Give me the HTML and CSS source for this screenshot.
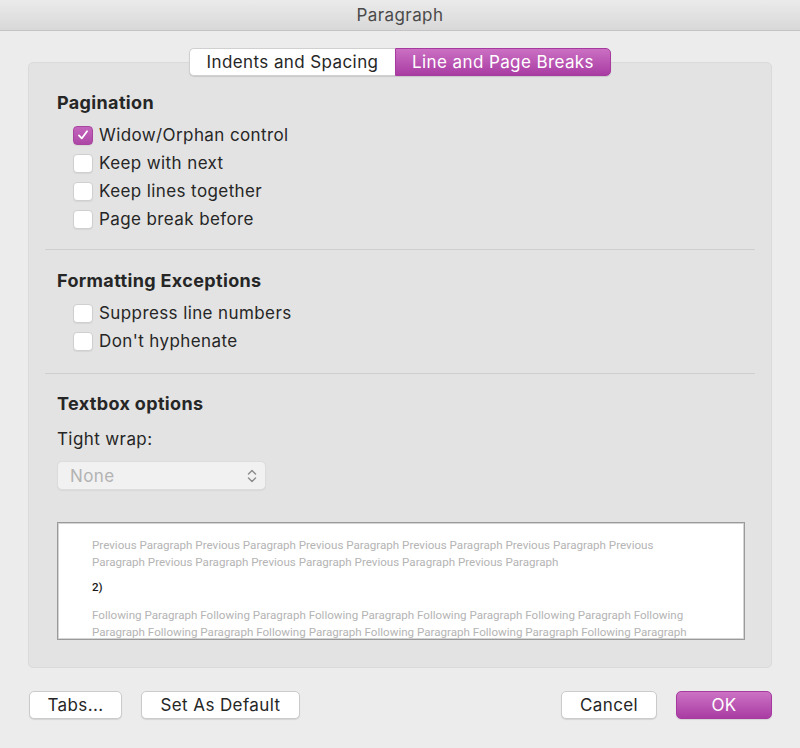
FILE: index.html
```html
<!DOCTYPE html>
<html>
<head>
<meta charset="utf-8">
<link rel="stylesheet" href="styles.css">
</head>
<body>
<div class="window">
  <div class="titlebar">Paragraph</div>
  <div class="main">
    <div class="tabs">
      <div class="tab">Indents and Spacing</div>
      <div class="tab active">Line and Page Breaks</div>
    </div>
    <div class="panel">
      <div class="section first">
        <div class="heading">Pagination</div>
        <div class="rows">
          <div class="row"><span class="cb checked"><svg viewBox="0 0 20 20" width="20" height="20"><path d="M5.5 10.5 L8.6 13.8 L14.5 5.8" fill="none" stroke="#fff" stroke-width="2" stroke-linecap="round" stroke-linejoin="round"/></svg></span>Widow/Orphan control</div>
          <div class="row"><span class="cb"></span>Keep with next</div>
          <div class="row"><span class="cb"></span>Keep lines together</div>
          <div class="row"><span class="cb"></span>Page break before</div>
        </div>
      </div>
      <div class="divider d1"></div>
      <div class="section second">
        <div class="heading">Formatting Exceptions</div>
        <div class="rows">
          <div class="row"><span class="cb"></span>Suppress line numbers</div>
          <div class="row"><span class="cb"></span>Don't hyphenate</div>
        </div>
      </div>
      <div class="divider d2"></div>
      <div class="section third">
        <div class="heading">Textbox options</div>
        <div class="label">Tight wrap:</div>
        <div class="select">
          <span class="select-text">None</span>
          <svg class="chev" viewBox="0 0 10 16" width="10" height="16"><path d="M1.5 6 L5 2.5 L8.5 6 M1.5 10 L5 13.5 L8.5 10" fill="none" stroke="#8a8a8a" stroke-width="1.4" stroke-linecap="round" stroke-linejoin="round"/></svg>
        </div>
        <div class="preview">
          <div class="pline">Previous Paragraph Previous Paragraph Previous Paragraph Previous Paragraph Previous Paragraph Previous</div>
          <div class="pline">Paragraph Previous Paragraph Previous Paragraph Previous Paragraph Previous Paragraph</div>
          <div class="pline num">2)</div>
          <div class="pline follow">Following Paragraph Following Paragraph Following Paragraph Following Paragraph Following Paragraph Following</div>
          <div class="pline">Paragraph Following Paragraph Following Paragraph Following Paragraph Following Paragraph Following Paragraph</div>
        </div>
      </div>
    </div>
    <div class="footer">
      <div class="group">
        <div class="btn b-tabs">Tabs...</div>
        <div class="btn b-default">Set As Default</div>
      </div>
      <div class="group">
        <div class="btn b-cancel">Cancel</div>
        <div class="btn b-ok">OK</div>
      </div>
    </div>
  </div>
</div>
</body>
</html>
```
FILE: styles.css
```css
* { box-sizing: border-box; }
html, body { margin: 0; padding: 0; }
body {
  width: 800px;
  height: 748px;
  overflow: hidden;
  background: #ececec;
  font-family: Inter, "Liberation Sans", sans-serif;
  letter-spacing: 0.4px;
  color: #262626;
}
.window {
  width: 800px;
  height: 748px;
  background: #ececec;
}
.titlebar {
  height: 31px;
  line-height: 31px;
  text-align: center;
  font-size: 17px;
  color: #4a4a4a;
  background: linear-gradient(#ebebeb, #d8d8d8);
  border-bottom: 1px solid #c4c4c4;
}
.main {
  padding: 0 28px;
}
.tabs {
  display: flex;
  justify-content: center;
  margin-top: 17px;
  height: 28px;
  position: relative;
  z-index: 1;
}
.tab {
  height: 28px;
  line-height: 27px;
  font-size: 17px;
  padding: 0;
  background: #fff;
  color: #262626;
  border: 1px solid #d0d0d0;
  border-right: none;
  border-radius: 5px 0 0 5px;
  box-shadow: 0 1px 1px rgba(0,0,0,0.12);
  width: 206px;
  text-align: center;
}
.tab.active {
  width: 216px;
  background: linear-gradient(#cb70c3, #a93ca3);
  color: #fff;
  border: 1px solid #a63a9f;
  border-radius: 0 5px 5px 0;
}
.panel {
  margin-top: -14px;
  height: 606px;
  background: #e3e3e3;
  border: 1px solid #dadada;
  border-radius: 5px;
  padding: 0 16px;
}
.section { padding-left: 12px; }
.section.first { padding-top: 30px; }
.heading {
  font-size: 18px;
  font-weight: 700;
  letter-spacing: 0.35px;
  line-height: 20px;
  height: 20px;
}
.rows {
  margin-top: 8px;
  padding-left: 16px;
}
.row {
  height: 28px;
  display: flex;
  align-items: center;
  font-size: 17px;
}
.cb {
  width: 20px;
  height: 19px;
  border-radius: 4px;
  background: #fff;
  border: 1px solid #cfcfcf;
  box-shadow: 0 1px 1px rgba(0,0,0,0.06);
  margin-right: 6px;
  display: flex;
  align-items: center;
  justify-content: center;
  flex: none;
}
.cb.checked {
  background: linear-gradient(#c465bc, #ad47a7);
  border-color: #a9459f;
}
.cb svg { display: block; }
.divider {
  height: 1px;
  background: #cfcfcf;
}
.d1 { margin-top: 16px; }
.section.second { padding-top: 21px; }
.d2 { margin-top: 18px; }
.section.third { padding-top: 20px; }
.label {
  margin-top: 15px;
  font-size: 17px;
  line-height: 20px;
}
.select {
  margin-top: 12px;
  width: 209px;
  height: 29px;
  background: #f1f1f1;
  border: 1px solid #dcdcdc;
  border-radius: 5px;
  display: flex;
  align-items: center;
  justify-content: space-between;
  padding: 0 8px 0 12px;
  box-shadow: 0 1px 1px rgba(0,0,0,0.05);
}
.select-text {
  font-size: 17px;
  color: #b3b3b3;
}
.chev { display: block; }
.preview {
  margin-top: 32px;
  width: 688px;
  height: 118px;
  background: #fff;
  border: 1px solid #9a9a9a;
  box-shadow: inset 0 0 0 1px #d4d4d4;
  padding: 14px 0 0 34px;
  overflow: hidden;
  font-family: Roboto, "Liberation Sans", sans-serif;
  font-size: 11.6px;
  letter-spacing: 0;
  color: #b4b4b4;
}
.pline {
  line-height: 17px;
  height: 17px;
  white-space: nowrap;
}
.pline.num {
  margin-top: 8px;
  color: #1a1a1a;
  font-weight: 500;
}
.pline.follow { margin-top: 11px; }
.footer {
  margin-top: 23px;
  display: flex;
  justify-content: space-between;
  padding-left: 1px;
}
.group {
  display: flex;
  gap: 19px;
}
.btn {
  height: 28px;
  line-height: 26px;
  font-size: 17px;
  text-align: center;
  background: #fff;
  border: 1px solid #cbcbcb;
  border-radius: 5px;
  box-shadow: 0 1px 1px rgba(0,0,0,0.1);
  color: #262626;
}
.b-tabs { width: 93px; }
.b-default { width: 159px; }
.b-cancel { width: 96px; }
.b-ok {
  width: 96px;
  background: linear-gradient(#cc72c4, #a93ca3);
  border-color: #a63a9f;
  color: #fff;
}
```
